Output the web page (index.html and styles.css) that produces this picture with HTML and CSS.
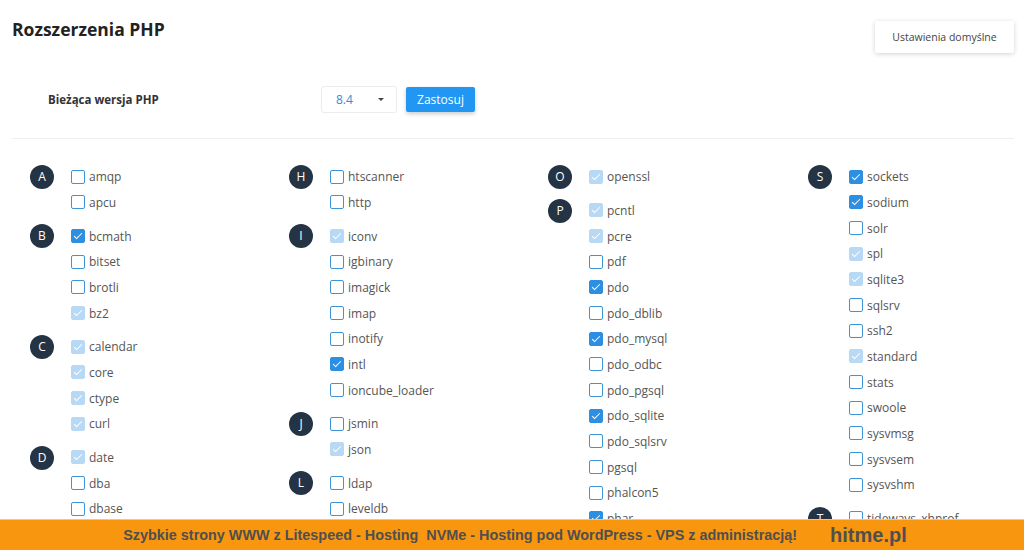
FILE: index.html
```html
<!DOCTYPE html>
<html lang="pl">
<head>
  <meta charset="UTF-8" />
  <meta name="viewport" content="width=device-width, initial-scale=1.0"/>
  <title>Rozszerzenia PHP</title>
  <link rel="stylesheet" href="styles.css">
</head>
<body>

  <div class="page">
    <div class="head">
      <h1>Rozszerzenia PHP</h1>
      <button class="btn-defaults">Ustawienia domyślne</button>
    </div>

    <div class="version-row">
      <div class="version-label">Bieżąca wersja PHP</div>
      <div class="version-select">
        <span>8.4</span>
        <span class="caret"></span>
      </div>
      <button class="btn-apply">Zastosuj</button>
    </div>

    <hr class="divider">

    <div class="ext-columns">
      <!-- kolumna 1 -->
      <div class="ext-col">
        <div class="ext-group">
          <div class="letter">A</div>
          <ul>
            <li><span class="box"></span>amqp</li>
            <li><span class="box"></span>apcu</li>
          </ul>
        </div>
        <div class="ext-group">
          <div class="letter">B</div>
          <ul>
            <li class="on"><span class="box"></span>bcmath</li>
            <li><span class="box"></span>bitset</li>
            <li><span class="box"></span>brotli</li>
            <li class="lock"><span class="box"></span>bz2</li>
          </ul>
        </div>
        <div class="ext-group">
          <div class="letter">C</div>
          <ul>
            <li class="lock"><span class="box"></span>calendar</li>
            <li class="lock"><span class="box"></span>core</li>
            <li class="lock"><span class="box"></span>ctype</li>
            <li class="lock"><span class="box"></span>curl</li>
          </ul>
        </div>
        <div class="ext-group">
          <div class="letter">D</div>
          <ul>
            <li class="lock"><span class="box"></span>date</li>
            <li><span class="box"></span>dba</li>
            <li><span class="box"></span>dbase</li>
          </ul>
        </div>
      </div>

      <!-- kolumna 2 -->
      <div class="ext-col">
        <div class="ext-group">
          <div class="letter">H</div>
          <ul>
            <li><span class="box"></span>htscanner</li>
            <li><span class="box"></span>http</li>
          </ul>
        </div>
        <div class="ext-group">
          <div class="letter">I</div>
          <ul>
            <li class="lock"><span class="box"></span>iconv</li>
            <li><span class="box"></span>igbinary</li>
            <li><span class="box"></span>imagick</li>
            <li><span class="box"></span>imap</li>
            <li><span class="box"></span>inotify</li>
            <li class="on"><span class="box"></span>intl</li>
            <li><span class="box"></span>ioncube_loader</li>
          </ul>
        </div>
        <div class="ext-group">
          <div class="letter">J</div>
          <ul>
            <li><span class="box"></span>jsmin</li>
            <li class="lock"><span class="box"></span>json</li>
          </ul>
        </div>
        <div class="ext-group">
          <div class="letter">L</div>
          <ul>
            <li><span class="box"></span>ldap</li>
            <li><span class="box"></span>leveldb</li>
          </ul>
        </div>
      </div>

      <!-- kolumna 3 -->
      <div class="ext-col">
        <div class="ext-group">
          <div class="letter">O</div>
          <ul>
            <li class="lock"><span class="box"></span>openssl</li>
          </ul>
        </div>
        <div class="ext-group">
          <div class="letter">P</div>
          <ul>
            <li class="lock"><span class="box"></span>pcntl</li>
            <li class="lock"><span class="box"></span>pcre</li>
            <li><span class="box"></span>pdf</li>
            <li class="on"><span class="box"></span>pdo</li>
            <li><span class="box"></span>pdo_dblib</li>
            <li class="on"><span class="box"></span>pdo_mysql</li>
            <li><span class="box"></span>pdo_odbc</li>
            <li><span class="box"></span>pdo_pgsql</li>
            <li class="on"><span class="box"></span>pdo_sqlite</li>
            <li><span class="box"></span>pdo_sqlsrv</li>
            <li><span class="box"></span>pgsql</li>
            <li><span class="box"></span>phalcon5</li>
            <li class="on"><span class="box"></span>phar</li>
          </ul>
        </div>
      </div>

      <!-- kolumna 4 -->
      <div class="ext-col">
        <div class="ext-group">
          <div class="letter">S</div>
          <ul>
            <li class="on"><span class="box"></span>sockets</li>
            <li class="on"><span class="box"></span>sodium</li>
            <li><span class="box"></span>solr</li>
            <li class="lock"><span class="box"></span>spl</li>
            <li class="lock"><span class="box"></span>sqlite3</li>
            <li><span class="box"></span>sqlsrv</li>
            <li><span class="box"></span>ssh2</li>
            <li class="lock"><span class="box"></span>standard</li>
            <li><span class="box"></span>stats</li>
            <li><span class="box"></span>swoole</li>
            <li><span class="box"></span>sysvmsg</li>
            <li><span class="box"></span>sysvsem</li>
            <li><span class="box"></span>sysvshm</li>
          </ul>
        </div>
        <div class="ext-group">
          <div class="letter">T</div>
          <ul>
            <li><span class="box"></span>tideways_xhprof</li>
          </ul>
        </div>
      </div>
    </div>
  </div>

  <div class="promo-bar">
    <span class="promo-text">Szybkie strony WWW z Litespeed - Hosting&nbsp; NVMe - Hosting pod WordPress - VPS z administracją!</span>
    <span class="promo-brand">hitme.pl</span>
  </div>

</body>
</html>
```

FILE: styles.css
```css
* {
  margin: 0;
  padding: 0;
  box-sizing: border-box;
}
html, body {
  height: 100%;
  overflow: hidden;
}
body {
  font-family: 'Open Sans', sans-serif;
  color: #555;
  background: #fff;
}
.page {
  padding: 0 10px 0 12px;
}
.head {
  display: flex;
  justify-content: space-between;
  align-items: flex-start;
}
.head h1 {
  margin-top: 18px;
  font-size: 17.5px;
  line-height: 22px;
  font-weight: 700;
  color: #222;
}
.btn-defaults {
  margin-top: 21px;
  width: 139px;
  height: 32px;
  font-family: 'Open Sans', sans-serif;
  font-size: 10.5px;
  color: #444;
  background: #fff;
  border: none;
  border-radius: 2px;
  box-shadow: 0 1px 5px rgba(0,0,0,0.18);
}
.version-row {
  display: flex;
  align-items: center;
  margin-top: 33px;
  padding-left: 36px;
}
.version-label {
  width: 273px;
  font-size: 11.5px;
  font-weight: 700;
  color: #333;
}
.version-select {
  width: 76px;
  height: 27px;
  display: flex;
  align-items: center;
  justify-content: space-between;
  padding: 0 12px 0 14px;
  border: 1px solid #ececec;
  border-radius: 3px;
  font-size: 12px;
  color: #3a8bd0;
}
.caret {
  width: 0;
  height: 0;
  border-left: 3px solid transparent;
  border-right: 3px solid transparent;
  border-top: 3px solid #444;
}
.btn-apply {
  margin-left: 9px;
  width: 69px;
  height: 25px;
  font-family: 'Open Sans', sans-serif;
  font-size: 12px;
  color: #fff;
  background: #2196f3;
  border: none;
  border-radius: 2px;
  box-shadow: 0 2px 4px rgba(0,0,0,0.2);
}
.divider {
  margin-top: 25px;
  border: none;
  border-top: 1px solid #efefef;
}
.ext-columns {
  display: grid;
  grid-template-columns: 259px 259px 260px 260px;
  padding: 25px 0 0 18px;
}
.ext-group {
  display: flex;
  align-items: flex-start;
  margin-bottom: 8px;
}
.letter {
  width: 24px;
  height: 24px;
  margin-top: 1px;
  border-radius: 50%;
  background: #253445;
  color: #fff;
  font-size: 12px;
  line-height: 24px;
  text-align: center;
}
.ext-group ul {
  list-style: none;
  margin-left: 17px;
}
.ext-group li {
  display: flex;
  align-items: center;
  gap: 4px;
  height: 25.67px;
  font-size: 12px;
  color: #555;
}
.box {
  position: relative;
  width: 14px;
  height: 14px;
  border: 1.5px solid #3d95d8;
  border-radius: 2px;
  background: #fff;
}
.on .box {
  background: #2d8fe2;
  border-color: #2d8fe2;
}
.lock .box {
  background: #b8d9f5;
  border-color: #b8d9f5;
}
.on .box::after,
.lock .box::after {
  content: "";
  position: absolute;
  left: 4px;
  top: 1px;
  width: 3px;
  height: 7px;
  border-right: 1.5px solid #fff;
  border-bottom: 1.5px solid #fff;
  transform: rotate(45deg);
}
.promo-bar {
  position: fixed;
  left: 0;
  right: 0;
  bottom: 0;
  height: 31px;
  display: flex;
  align-items: center;
  justify-content: center;
  gap: 33px;
  padding-left: 6px;
  background: #f99610;
  border-top: 1px solid #fbc766;
  font-family: 'Liberation Sans', Arial, sans-serif;
  font-weight: 700;
  color: #4f4f4f;
}
.promo-text {
  font-size: 14.4px;
}
.promo-brand {
  font-size: 20px;
}
```
